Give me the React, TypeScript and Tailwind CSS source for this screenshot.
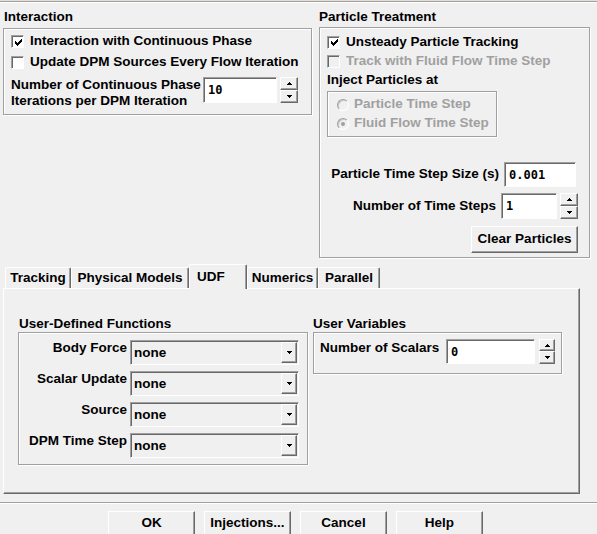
import React from "react";

// classic 3D borders
const raised =
  "border border-t-white border-l-white border-r-[#696969] border-b-[#696969] shadow-[inset_-1px_-1px_0_#a0a0a0]";
const sunken =
  "border border-t-[#a0a0a0] border-l-[#a0a0a0] border-r-white border-b-white shadow-[inset_1px_1px_0_#696969]";
const etched = "border border-[#a0a0a0] shadow-[inset_1px_1px_0_#fff,1px_1px_0_#fff]";

const UpArrow = () => (
  <svg width="5" height="3" viewBox="0 0 5 3">
    <path d="M2 0h1v1H2zM1 1h3v1H1zM0 2h5v1H0z" fill="#000" />
  </svg>
);

const DownArrow = () => (
  <svg width="5" height="3" viewBox="0 0 5 3">
    <path d="M0 0h5v1H0zM1 1h3v1H1zM2 2h1v1H2z" fill="#000" />
  </svg>
);

const Spinner = ({ w, top, bottom }: { w: string; top: string; bottom: string }) => (
  <div className={`flex flex-col ${w}`}>
    <div className={`flex items-center justify-center bg-[#f0f0f0] ${raised} ${top}`}>
      <UpArrow />
    </div>
    <div className={`flex items-center justify-center bg-[#f0f0f0] ${raised} ${bottom}`}>
      <DownArrow />
    </div>
  </div>
);

const CheckBox = ({ checked, disabled }: { checked?: boolean; disabled?: boolean }) => (
  <span
    className={`flex h-[13px] w-[13px] shrink-0 items-center justify-center ${sunken} ${
      disabled ? "bg-[#f0f0f0]" : "bg-white"
    }`}
  >
    {checked && (
      <svg width="7" height="7" viewBox="0 0 7 7" className="ml-[1px] mt-[1px]">
        <path
          d="M6 0h1v1H6zM5 1h2v1H5zM0 2h1v1H0zM4 2h3v1H4zM0 3h2v1H0zM3 3h3v1H3zM0 4h5v1H0zM1 5h3v1H1zM2 6h1v1H2z"
          fill="#000"
        />
      </svg>
    )}
  </span>
);

const Radio = ({ selected }: { selected?: boolean }) => (
  <span className="flex h-[12px] w-[12px] shrink-0 items-center justify-center rounded-full border border-t-[#a0a0a0] border-l-[#a0a0a0] border-r-white border-b-white bg-[#f0f0f0] shadow-[inset_1px_1px_0_#c8c8c8]">
    {selected && <span className="h-[4px] w-[4px] rounded-full bg-[#a0a0a0]" />}
  </span>
);

const Field = ({ value, className }: { value: string; className: string }) => (
  <div
    className={`flex items-center bg-white pl-[4px] font-['DejaVu_Sans_Mono',monospace] text-[12px] font-bold ${sunken} ${className}`}
  >
    {value}
  </div>
);

const Dropdown = () => (
  <div className={`flex h-[25px] w-[169px] bg-[#f0f0f0] ${sunken}`}>
    <span className="flex flex-1 items-center pl-[3px] pt-[1px]">none</span>
    <span className={`my-[1px] mr-[1px] flex w-[16px] items-center justify-center bg-[#f0f0f0] ${raised}`}>
      <DownArrow />
    </span>
  </div>
);

const Button = ({ label, className }: { label: string; className: string }) => (
  <div className={`flex items-center justify-center bg-[#f0f0f0] ${raised} ${className}`}>{label}</div>
);

const tabs = [
  { label: "Tracking", w: "w-[66px]" },
  { label: "Physical Models", w: "w-[118px]" },
  { label: "UDF", w: "w-[58px]", active: true },
  { label: "Numerics", w: "w-[71px]" },
  { label: "Parallel", w: "w-[62px]" },
];

const udfRows = ["Body Force", "Scalar Update", "Source", "DPM Time Step"];

export default function App() {
  return (
    <div className="relative h-[534px] w-[597px] overflow-hidden bg-[#f0f0f0] font-['Liberation_Sans',Arial,sans-serif] text-[13.5px] font-bold text-black">
      {/* top edge */}
      <div className="h-[1px] bg-[#e4ded6]" />
      <div className="h-[1px] bg-[#a0a0a0]" />
      <div className="h-[1px] bg-white" />

      {/* Interaction / Particle Treatment */}
      <div className="flex">
        <div className="ml-[3px] w-[309px]">
          <div className="mt-[6px] h-[16px] pl-[1px] leading-[16px]">Interaction</div>
          <div className={`mt-[3px] h-[87px] ${etched} pl-[7px] pt-[2px]`}>
            <div className="flex h-[21px] items-center gap-[6px]">
              <CheckBox checked />
              <span>Interaction with Continuous Phase</span>
            </div>
            <div className="flex h-[21px] items-center gap-[6px]">
              <CheckBox />
              <span>Update DPM Sources Every Flow Iteration</span>
            </div>
            <div className="mt-[4px] flex items-start">
              <div className="w-[192px] leading-[16px]">
                <div>Number of Continuous Phase</div>
                <div>Iterations per DPM Iteration</div>
              </div>
              <Field value="10" className="h-[26px] w-[74px]" />
              <div className="ml-[3px]">
                <Spinner w="w-[18px]" top="h-[13px]" bottom="h-[13px]" />
              </div>
            </div>
          </div>
        </div>

        <div className="ml-[7px] w-[271px]">
          <div className="mt-[6px] h-[16px] leading-[16px]">Particle Treatment</div>
          <div className={`mt-[2px] h-[231px] ${etched} pl-[7px] pt-[4px]`}>
            <div className="flex h-[20px] items-center gap-[6px]">
              <CheckBox checked />
              <span>Unsteady Particle Tracking</span>
            </div>
            <div className="flex h-[18px] items-center gap-[6px] text-[#a0a0a0]">
              <CheckBox disabled />
              <span>Track with Fluid Flow Time Step</span>
            </div>
            <div className="mt-[2px] h-[16px] leading-[16px]">Inject Particles at</div>
            <div className={`mt-[3px] h-[46px] w-[170px] ${etched} pl-[9px] pt-[3px] text-[#a0a0a0]`}>
              <div className="flex h-[19px] items-center gap-[5px]">
                <Radio />
                <span>Particle Time Step</span>
              </div>
              <div className="flex h-[19px] items-center gap-[5px]">
                <Radio selected />
                <span>Fluid Flow Time Step</span>
              </div>
            </div>
            <div className="mt-[25px] flex h-[25px] items-center justify-end gap-[5px] pr-[13px]">
              <span>Particle Time Step Size (s)</span>
              <Field value="0.001" className="h-[25px] w-[72px]" />
            </div>
            <div className="mt-[6px] flex h-[26px] items-center justify-end pr-[11px]">
              <span className="mr-[5px]">Number of Time Steps</span>
              <Field value="1" className="h-[26px] w-[56px]" />
              <div className="ml-[3px]">
                <Spinner w="w-[18px]" top="h-[13px]" bottom="h-[13px]" />
              </div>
            </div>
            <div className="mt-[7px] flex justify-end pr-[11px]">
              <Button label="Clear Particles" className="h-[27px] w-[107px]" />
            </div>
          </div>
        </div>
      </div>

      {/* tabs */}
      <div className="mt-[6px] flex h-[24px] items-end pl-[5px]">
        {tabs.map((t) =>
          t.active ? (
            <div
              key={t.label}
              className={`relative z-10 -mb-[1px] flex h-[25px] ${t.w} items-start rounded-t-[2px] border-t border-l border-r border-t-white border-l-white border-r-[#696969] bg-[#f0f0f0] pl-[7px] pt-[2px] shadow-[inset_-1px_0_0_#a0a0a0]`}
            >
              {t.label}
            </div>
          ) : (
            <div
              key={t.label}
              className={`flex h-[21px] ${t.w} items-center justify-center rounded-t-[2px] border-t border-l border-r border-t-white border-l-white border-r-[#696969] pt-[1px] shadow-[inset_-1px_0_0_#a0a0a0]`}
            >
              {t.label}
            </div>
          )
        )}
      </div>

      {/* UDF panel */}
      <div className={`ml-[3px] h-[206px] w-[577px] ${raised} flex gap-[5px] pl-[14px] pt-[27px]`}>
        <div className="w-[290px]">
          <div className="h-[16px] pl-[1px] leading-[16px]">User-Defined Functions</div>
          <div className={`h-[133px] ${etched} flex flex-col gap-[6px] pr-[8px] pt-[7px]`}>
            {udfRows.map((r) => (
              <div key={r} className="flex h-[25px] items-start justify-end gap-[3px]">
                <span className="leading-[16px]">{r}</span>
                <Dropdown />
              </div>
            ))}
          </div>
        </div>
        <div className="w-[249px]">
          <div className="h-[16px] leading-[16px]">User Variables</div>
          <div className={`h-[42px] ${etched} flex items-start pl-[6px] pt-[6px]`}>
            <span className="mt-[1px] w-[126px] leading-[16px]">Number of Scalars</span>
            <Field value="0" className="h-[25px] w-[89px]" />
            <div className="ml-[4px]">
              <Spinner w="w-[16px]" top="h-[12px]" bottom="h-[13px]" />
            </div>
          </div>
        </div>
      </div>

      {/* separator + buttons */}
      <div className="mt-[8px] h-[1px] bg-[#a0a0a0]" />
      <div className="h-[1px] bg-white" />
      <div className="mt-[7px] flex gap-[9px] pl-[108px]">
        {["OK", "Injections...", "Cancel", "Help"].map((b) => (
          <Button key={b} label={b} className="h-[25px] w-[87px]" />
        ))}
      </div>
    </div>
  );
}
